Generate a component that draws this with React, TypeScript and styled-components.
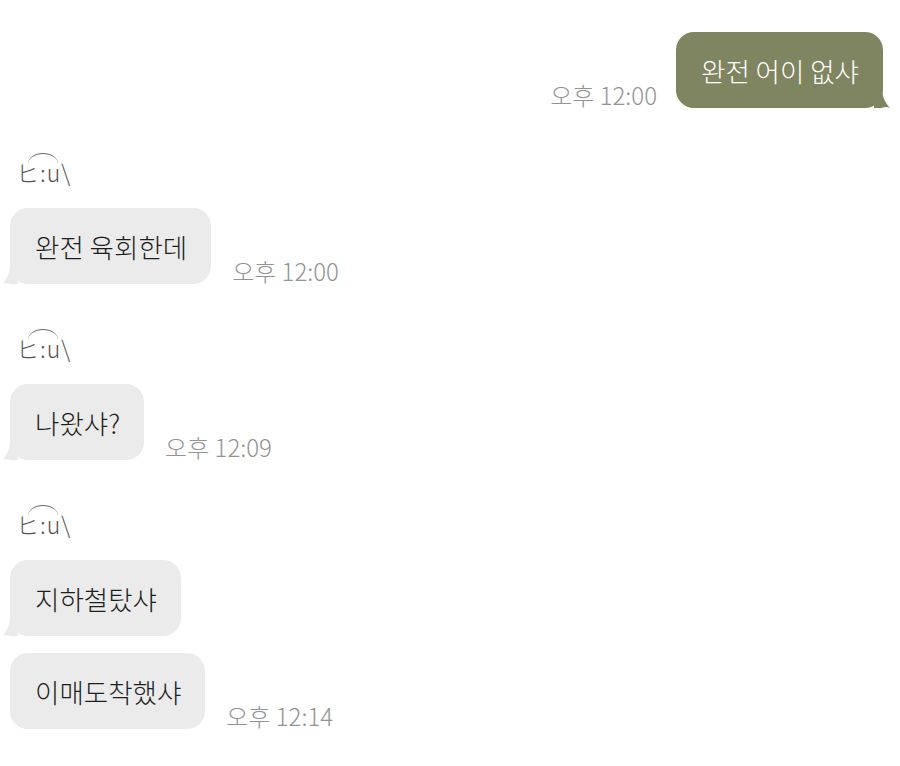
import React from "react";
import styled, { createGlobalStyle } from "styled-components";

const Global = createGlobalStyle`
  html, body { margin: 0; padding: 0; background: #ffffff; }
  body { font-family: "Noto Sans CJK KR", "Noto Sans", sans-serif; }
`;

const Page = styled.div`
  width: 900px;
  height: 766px;
  box-sizing: border-box;
  padding: 32px 17px 0 10px;
  display: flex;
  flex-direction: column;
  overflow: hidden;
`;

const Row = styled.div<{ $mine?: boolean; $gap?: number }>`
  display: flex;
  align-items: flex-end;
  justify-content: ${(p) => (p.$mine ? "flex-end" : "flex-start")};
  gap: ${(p) => (p.$mine ? 19 : 21)}px;
  margin-top: ${(p) => p.$gap ?? 0}px;
`;

const Bubble = styled.div<{ $mine?: boolean }>`
  position: relative;
  height: 76px;
  box-sizing: border-box;
  padding: 0 24px 0 25px;
  display: flex;
  align-items: center;
  border-radius: 18px;
  background: ${(p) => (p.$mine ? "#7f8561" : "#ebebeb")};
  color: ${(p) => (p.$mine ? "#ffffff" : "#1e1e1e")};
  font-size: 26.5px;
  font-weight: 300;
  white-space: nowrap;
`;

const Tail = styled.svg<{ $mine?: boolean }>`
  position: absolute;
  bottom: 0;
  width: 16px;
  height: 26px;
  ${(p) => (p.$mine ? "right: -7px;" : "left: -8px;")}
`;

const Time = styled.div`
  font-size: 24px;
  color: #939393;
  line-height: 1;
  padding-bottom: 1px;
  white-space: nowrap;
  font-weight: 300;
`;

const Name = styled.div`
  position: relative;
  margin-top: 42px;
  margin-left: 6px;
  height: 58px;
  font-size: 23px;
  font-weight: 300;
  color: #555555;
  line-height: 1;
  display: flex;
  align-items: flex-start;
  padding-top: 11px;
  box-sizing: border-box;
`;

const NameText = styled.span`
  position: relative;
  letter-spacing: 1px;
`;

const Arc = styled.span`
  position: absolute;
  left: 12px;
  top: -8px;
  width: 30px;
  height: 10px;
  border-top: 1.5px solid #666;
  border-radius: 50% 50% 0 0 / 100% 100% 0 0;
`;

const LeftTail = () => (
  <Tail viewBox="0 0 16 26">
    <path d="M16 0 L16 26 L8 26 Q4 24 0 26 Q6 20 8 10 L8 0 Z" fill="#ebebeb" />
  </Tail>
);

const RightTail = () => (
  <Tail $mine viewBox="0 0 16 26">
    <path d="M0 0 L0 26 L8 26 Q12 24 16 26 Q10 20 8 10 L8 0 Z" fill="#7f8561" />
  </Tail>
);

const Sender = () => (
  <Name>
    <NameText>
      ヒ:u\
      <Arc />
    </NameText>
  </Name>
);

export default function App() {
  return (
    <>
      <Global />
      <Page>
        <Row $mine>
          <Time>오후 12:00</Time>
          <Bubble $mine>
            완전 어이 없샤
            <RightTail />
          </Bubble>
        </Row>

        <Sender />
        <Row>
          <Bubble>
            완전 육회한데
            <LeftTail />
          </Bubble>
          <Time>오후 12:00</Time>
        </Row>

        <Sender />
        <Row>
          <Bubble>
            나왔샤?
            <LeftTail />
          </Bubble>
          <Time>오후 12:09</Time>
        </Row>

        <Sender />
        <Row>
          <Bubble>
            지하철탔샤
            <LeftTail />
          </Bubble>
        </Row>
        <Row $gap={17}>
          <Bubble>이매도착했샤</Bubble>
          <Time>오후 12:14</Time>
        </Row>
      </Page>
    </>
  );
}
